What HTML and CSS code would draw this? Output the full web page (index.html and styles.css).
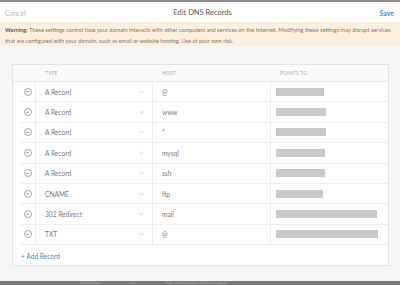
FILE: index.html
```html
<!DOCTYPE html>
<html lang="en">
<head>
  <meta charset="UTF-8" />
  <title>Edit DNS Records</title>
  <link rel="stylesheet" href="styles.css">
</head>
<body>
  <div class="modal">
    <header class="modal-head">
      <a class="cancel" href="#">Cancel</a>
      <div class="title">Edit DNS Records</div>
      <a class="save" href="#">Save</a>
    </header>

    <div class="warning">
      <b>Warning:</b> These settings control how your domain interacts with other computers and services on the Internet. Modifying these settings may disrupt services<br>
      that are configured with your domain, such as email or website hosting. Use at your own risk.
    </div>

    <main class="body">
      <div class="card">
        <div class="thead">
          <span></span>
          <span>Type</span>
          <span>Host</span>
          <span>Points to</span>
        </div>
        <div id="rows"></div>
        <a class="add" href="#">+ Add Record</a>
      </div>
    </main>
  </div>

  <div class="behind">
    <span>302 Redirect</span><span>mail</span><span>http://www.example-redirect.com/path</span>
  </div>

  <script>
    const records = [
      ['A Record', '@', 48],
      ['A Record', 'www', 50],
      ['A Record', '*', 50],
      ['A Record', 'mysql', 49],
      ['A Record', 'ssh', 49],
      ['CNAME', 'ftp', 47],
      ['302 Redirect', 'mail', 101],
      ['TXT', '@', 102]
    ];
    const rows = document.getElementById('rows');
    rows.innerHTML = records.map(r => `
      <div class="row">
        <div class="cell icon"><span class="minus"></span></div>
        <div class="cell type">${r[0]}<svg class="chev" viewBox="0 0 6 4"><path d="M0.5 0.8 L3 3.2 L5.5 0.8" /></svg></div>
        <div class="cell host">${r[1]}</div>
        <div class="cell dest"><span class="blur" style="width:${r[2]}px"></span></div>
      </div>
    `).join('');
  </script>
</body>
</html>
```

FILE: styles.css
```css
* { box-sizing: border-box; margin: 0; padding: 0; }
html, body {
  width: 400px;
  height: 285px;
  overflow: hidden;
}
body {
  font-family: 'Lato', 'Open Sans', sans-serif;
  background: #f6f6f7;
  color: #777;
  border-top: 2px solid #8c8c8c;
}
a { text-decoration: none; color: inherit; }

.modal {
  height: 279px;
  display: flex;
  flex-direction: column;
}

.modal-head {
  height: 20px;
  display: flex;
  align-items: center;
  justify-content: space-between;
  padding: 1px 6px 0 5px;
  background: #fff;
  font-size: 7px;
}
.cancel { color: #b9b9b9; }
.title { color: #555; font-size: 7.5px; }
.save { color: #3b8ecb; font-weight: 700; }

.warning {
  background: #fdeee0;
  color: #8a7866;
  font-size: 5.65px;
  line-height: 11px;
  padding: 2px 5px 1px;
  white-space: nowrap;
  height: 24px;
}
.warning b { color: #6f5a45; }

.body {
  flex: 1;
  padding: 18px 11px 0 12px;
}
.card {
  background: #fff;
  border: 1px solid #e4e4e4;
  height: 202px;
}

.thead {
  display: grid;
  grid-template-columns: 23px 117px 118px 1fr;
  height: 17px;
  align-items: center;
  background: #fafafa;
  border-bottom: 1px solid #ececec;
  font-size: 4.8px;
  text-transform: uppercase;
  letter-spacing: 0.3px;
  color: #aaa;
}
.thead span { padding-left: 9px; }

.row {
  display: grid;
  grid-template-columns: 15px 117px 118px 1fr;
  margin-left: 8px;
  height: 20.4px;
  border-bottom: 1px solid #eeeeee;
  font-size: 6.6px;
  color: #7a7a7a;
}
.cell {
  display: flex;
  align-items: center;
  padding-left: 9px;
  border-right: 1px solid #eeeeee;
}
.cell.icon { padding-left: 0; justify-content: center; padding-right: 0; }
.cell.dest { border-right: none; padding-left: 5px; }

.minus {
  width: 8px;
  height: 8px;
  border: 1px solid #a9a9a9;
  border-radius: 50%;
  position: relative;
  margin-left: -1px;
}
.minus::after {
  content: '';
  position: absolute;
  left: 1.5px;
  right: 1.5px;
  top: 2.5px;
  height: 1px;
  background: #a9a9a9;
}

.chev {
  width: 5px;
  height: 4px;
  margin-left: auto;
  margin-right: 8px;
  fill: none;
  stroke: #bbb;
  stroke-width: 0.8;
}

.blur {
  display: block;
  height: 8px;
  background: #c9c9c9;
}

.add {
  display: block;
  padding: 7px 0 0 8px;
  font-size: 6.6px;
  color: #3b8ecb;
}

.behind {
  height: 4px;
  background: #7a7a7a;
  display: flex;
  gap: 30px;
  padding-left: 80px;
  font-size: 3.5px;
  line-height: 4px;
  color: #a4a4a4;
  overflow: hidden;
}
```
